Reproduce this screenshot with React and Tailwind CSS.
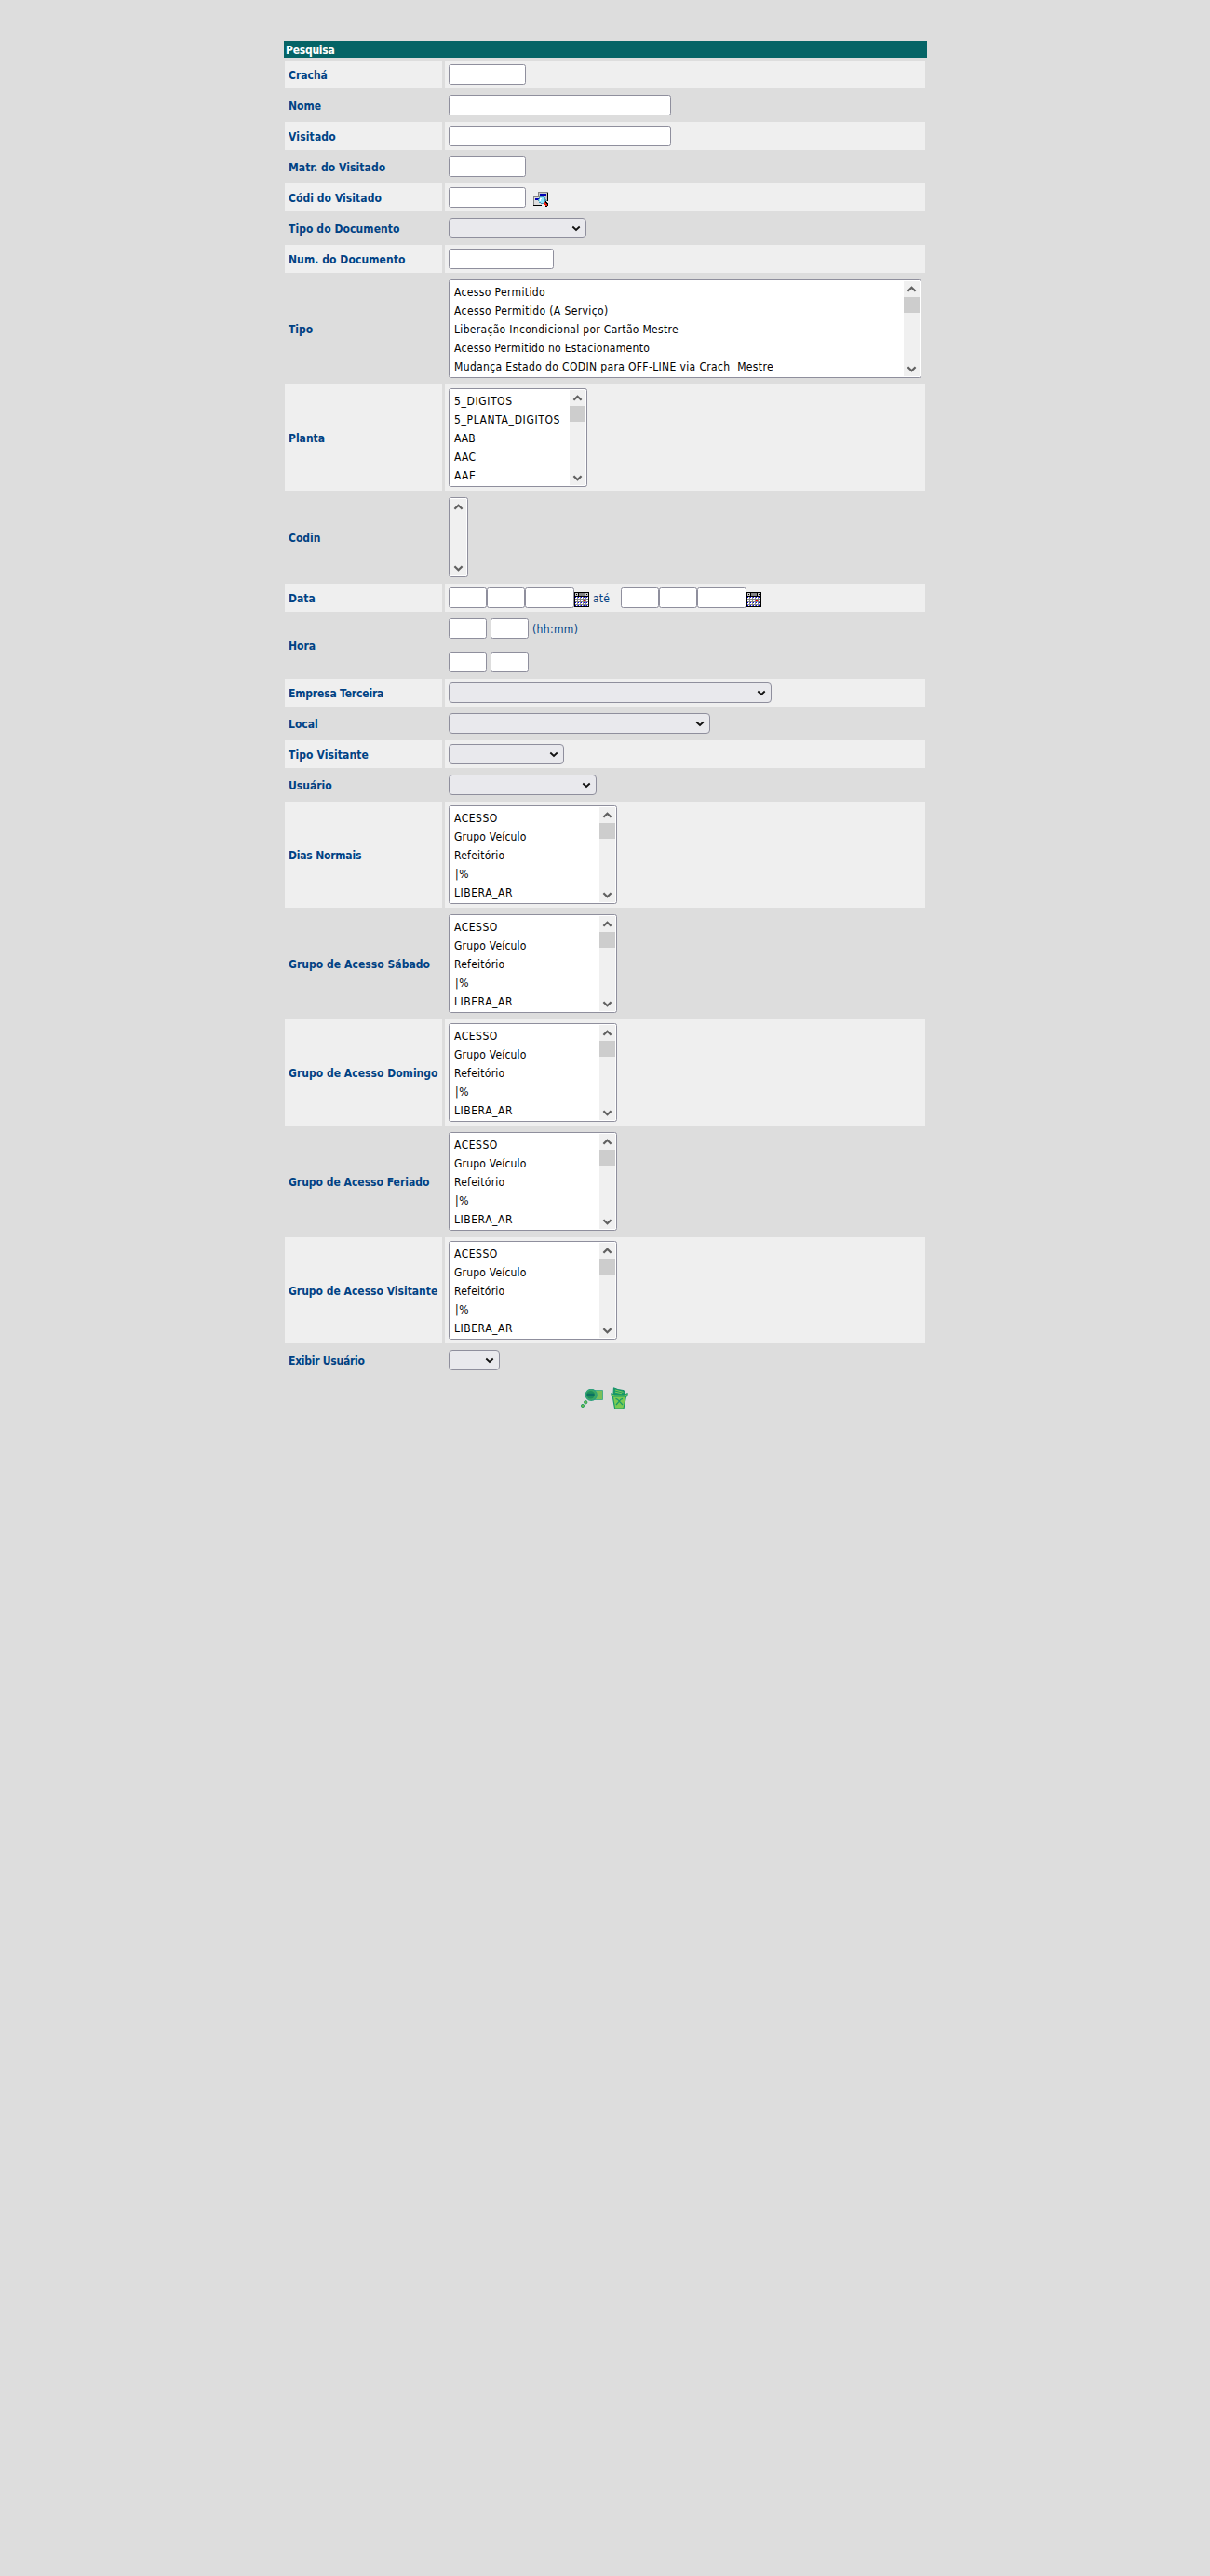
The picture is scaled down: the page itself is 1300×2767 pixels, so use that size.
import React from "react";

const Chevron = () => (
  <svg className="block h-[7px] w-[10px]" viewBox="0 0 10 7" fill="none">
    <path d="M1.3 1.5L5 5L8.7 1.5" stroke="#111111" strokeWidth="1.8" />
  </svg>
);

const Arrow = ({ down }) => (
  <svg className="block size-[17px]" viewBox="0 0 17 17" fill="none">
    <path
      d={down ? "M4.4 7.2L8.5 11.3L12.6 7.2" : "M4.4 10.8L8.5 6.7L12.6 10.8"}
      stroke="#606060"
      strokeWidth="2.2"
    />
  </svg>
);

const Field = ({ w }) => (
  <input
    type="text"
    className={`block h-[22px] shrink-0 rounded-[2.5px] border border-[#8f8f9d] bg-white ${w}`}
  />
);

const Dropdown = ({ w }) => (
  <div
    className={`flex h-[22px] items-center justify-end rounded-[4px] border border-[#8f8f9d] bg-[#e9e9ed] pr-[5px] pt-px ${w}`}
  >
    <Chevron />
  </div>
);

const ListBox = ({ w, items, thumb = true, h = "h-[106px]" }) => (
  <div
    className={`flex justify-between rounded-[2.5px] border border-[#8f8f9d] bg-white p-px text-black ${w} ${h}`}
  >
    {items && (
      <ul className="pl-1 pt-[2px]">
        {items.map(([text, tracking]) => (
          <li key={text} className={`h-5 whitespace-pre leading-5 ${tracking}`}>
            {text}
          </li>
        ))}
      </ul>
    )}
    <div className="flex w-[17px] flex-col justify-between bg-[#f0f0f0]">
      <div>
        <Arrow />
        {thumb && <div className="h-[17px] bg-[#cdcdcd]" />}
      </div>
      <Arrow down />
    </div>
  </div>
);

const Lookup = () => (
  <svg className="block size-4" viewBox="0 0 16 16" shapeRendering="crispEdges">
    <path fill="#848484" d="M5 0h11v10H5z" />
    <path fill="#c6c6c6" d="M6 1h9v8H6z" />
    <path fill="#0000b5" d="M7 2h7v2H7z" />
    <path fill="#000" d="M15 1h1v9h-1z" />
    <path fill="#848484" d="M0 5h8v10H0z" />
    <path fill="#dedede" d="M1 6h8v8H1z" />
    <path fill="#0000b5" d="M2 7h4v2H2z" />
    <path fill="#000" d="M0 14h9v1H0z" />
    <path fill="#4a94b5" d="M7 5h4v1h2v2h1v4h-2v1H8v-1H6v-2H5V8h1V6h1z" />
    <path fill="#8ce7ff" d="M7 6h4v1h1v4h-1v1H8v-1H6V8h1z" />
    <path fill="#fff" d="M7 7h2v1H8v2H7z" />
    <path fill="#000" d="M13 10h1v1h1v1h1v3h-1v1h-2v-1h2v-2h-1v-1h-1z" />
    <path fill="#ef2110" d="M11 11h2v1h1v1h1v2h-2v-1h-1v-1h-1z" />
    <path fill="#ffb5a5" d="M11 11h1v1h-1z" />
  </svg>
);

const dotCols = [1, 4, 7, 10, 13];
const dotRows = [5, 8, 11, 14];
const Calendar = () => (
  <svg className="block size-4" viewBox="0 0 16 16" shapeRendering="crispEdges">
    <path fill="#000" d="M0 0h16v16H0z" />
    <path fill="#848484" d="M5 1h6v3H5z" />
    <path fill="#c6c6c6" d="M1 1h3v3H1zM12 1h3v3h-3z" />
    <path fill="#000" d="M2 2h1v1H2zM13 2h1v1h-1z" />
    <path fill="#fff" d="M1 5h14v10H1z" />
    <path
      fill="#848484"
      d="M3 5h1v10H3zM6 5h1v10H6zM9 5h1v10H9zM12 5h1v10h-1zM1 7h14v1H1zM1 10h14v1H1zM1 13h14v1H1z"
    />
    {dotRows.map((y) =>
      dotCols.map((x) => <path key={`${x}-${y}`} fill="#0000ff" d={`M${x} ${y}h1v1h-1z`} />)
    )}
    <path fill="#ff0000" d="M10 8h2v2h-2z" />
    <path fill="#ffff00" d="M10 8h1v1h-1z" />
  </svg>
);

const SearchIcon = () => (
  <svg className="block h-[20px] w-[24px]" viewBox="0 0 24 20">
    <path fill="#7bbf5a" stroke="#4cae88" strokeWidth="1" d="M11 1.5h12.5v10H11z" />
    <circle cx="11.2" cy="6.3" r="6" fill="#3fa860" stroke="#2da07c" strokeWidth="1.2" />
    <circle cx="10.6" cy="6.3" r="4.2" fill="#1e8f5c" />
    <path fill="#0c7062" d="M6.5 4.8h8v3h-8z" />
    <circle cx="5.2" cy="14.2" r="1.7" fill="#6abf4b" stroke="#2f9f68" />
    <circle cx="2" cy="18" r="1.6" fill="#6abf4b" stroke="#2f9f68" />
  </svg>
);

const TrashIcon = () => (
  <svg className="block h-[24px] w-[19px]" viewBox="0 0 19 24">
    <path fill="#1a9a68" stroke="#129068" d="M3 8L3.4 .8L8 2.6L14.2 3.6L15.4 8z" />
    <path stroke="#7ccb58" strokeWidth="1" fill="none" d="M5 3l8.5 2.4M5 5.2l7 1.6" />
    <path fill="#7acb52" stroke="#18996c" strokeWidth="1.2" d="M2 8.5L4.6 23H14L16.8 8.5z" />
    <path fill="#7acb52" stroke="#18996c" d="M.7 6.6L4 8l10.5.2 3.8-1.6-.6 3.4H1.4z" />
    <path fill="none" stroke="#18996c" strokeWidth="1.2" d="M5.5 12.4l2 .8L13 19M13 12.4l-2 .8L6 19" />
  </svg>
);

const groups = [
  ["ACESSO", "tracking-[0.5px]"],
  ["Grupo Veículo", "tracking-[0.2px]"],
  ["Refeitório", "tracking-[0.25px]"],
  ["|%", "pl-px tracking-[0.6px]"],
  ["LIBERA_AR", "tracking-[0.55px]"],
];
const tipos = [
  ["Acesso Permitido", "tracking-[0.36px]"],
  ["Acesso Permitido (A Serviço)", "tracking-[0.39px]"],
  ["Liberação Incondicional por Cartão Mestre", "tracking-[0.31px]"],
  ["Acesso Permitido no Estacionamento", "tracking-[0.31px]"],
  ["Mudança Estado do CODIN para OFF-LINE via Crach  Mestre", "tracking-[0.36px]"],
];
const plantas = [
  ["5_DIGITOS", "tracking-[0.6px]"],
  ["5_PLANTA_DIGITOS", "tracking-[0.63px]"],
  ["AAB", "tracking-[0.1px]"],
  ["AAC", "tracking-[0.3px]"],
  ["AAE", "tracking-[0.4px]"],
];

const DateFields = () => (
  <div className="flex h-[22px]">
    <Field w="w-[41px]" />
    <Field w="w-[41px]" />
    <Field w="w-[53px]" />
    <div className="pt-[5px]">
      <Calendar />
    </div>
  </div>
);

const GroupList = () => <ListBox w="w-[181px]" items={groups} />;

const rows = [
  ["Crachá", "", <Field w="w-[83px]" />],
  ["Nome", "", <Field w="w-[239px]" />],
  ["Visitado", "tracking-[0.15px]", <Field w="w-[239px]" />],
  ["Matr. do Visitado", "tracking-[0.06px]", <Field w="w-[83px]" />],
  [
    "Códi do Visitado",
    "tracking-[0.06px]",
    <div className="flex gap-2">
      <Field w="w-[83px]" />
      <div className="pt-[5px]">
        <Lookup />
      </div>
    </div>,
  ],
  ["Tipo do Documento", "tracking-[0.08px]", <Dropdown w="w-[148px]" />],
  ["Num. do Documento", "tracking-[0.08px]", <Field w="w-[113px]" />],
  ["Tipo", "", <ListBox w="w-[508px]" items={tipos} />],
  ["Planta", "", <ListBox w="w-[149px]" items={plantas} />],
  ["Codin", "", <ListBox w="w-[21px]" h="h-[86px]" thumb={false} />],
  [
    "Data",
    "",
    <div className="flex h-[22px]">
      <DateFields />
      <span className="w-[34px] pl-1 leading-[24px] tracking-[0.2px]">até</span>
      <DateFields />
    </div>,
  ],
  [
    "Hora",
    "",
    <div className="flex flex-col gap-[14px]">
      <div className="flex h-[22px] gap-1">
        <Field w="w-[41px]" />
        <Field w="w-[41px]" />
        <span className="leading-[24px] tracking-[0.35px]">(hh:mm)</span>
      </div>
      <div className="flex gap-1">
        <Field w="w-[41px]" />
        <Field w="w-[41px]" />
      </div>
    </div>,
  ],
  ["Empresa Terceira", "tracking-[-0.17px]", <Dropdown w="w-[347px]" />],
  ["Local", "", <Dropdown w="w-[281px]" />],
  ["Tipo Visitante", "tracking-[0.1px]", <Dropdown w="w-[124px]" />],
  ["Usuário", "", <Dropdown w="w-[159px]" />],
  ["Dias Normais", "tracking-[-0.2px]", <GroupList />],
  ["Grupo de Acesso Sábado", "tracking-[0.05px]", <GroupList />],
  ["Grupo de Acesso Domingo", "tracking-[0.03px]", <GroupList />],
  ["Grupo de Acesso Feriado", "", <GroupList />],
  ["Grupo de Acesso Visitante", "", <GroupList />],
  ["Exibir Usuário", "tracking-[-0.25px]", <Dropdown w="w-[55px]" />],
];

export default function App() {
  return (
    <div className="min-h-[2767px] bg-[#dddddd] pl-[305px] pt-[44px] font-['DejaVu_Sans_Condensed','DejaVu_Sans',sans-serif] text-[12px] text-[#004284] [font-stretch:condensed]">
      <div className="w-[691px]">
        <h1 className="h-[18px] bg-[#056466] pl-[2px] pt-px font-bold leading-[18px] tracking-[-0.25px] text-white">
          Pesquisa
        </h1>
        <div className="flex flex-col gap-[3px] pl-px pr-[2px] pt-[3px]">
          {rows.map(([label, tracking, control], i) => (
            <div key={label} className="flex gap-[3px]">
              <div
                className={`flex w-[169px] shrink-0 items-center whitespace-nowrap pl-1 pt-[2px] font-bold ${
                  i % 2 ? "" : "bg-[#efefef]"
                }`}
              >
                <span className={tracking}>{label}</span>
              </div>
              <div className={`w-[516px] p-1 ${i % 2 ? "" : "bg-[#efefef]"}`}>{control}</div>
            </div>
          ))}
        </div>
        <div className="flex gap-2 pl-[319px] pt-[14px]">
          <div className="pt-[2px]">
            <SearchIcon />
          </div>
          <TrashIcon />
        </div>
      </div>
    </div>
  );
}
